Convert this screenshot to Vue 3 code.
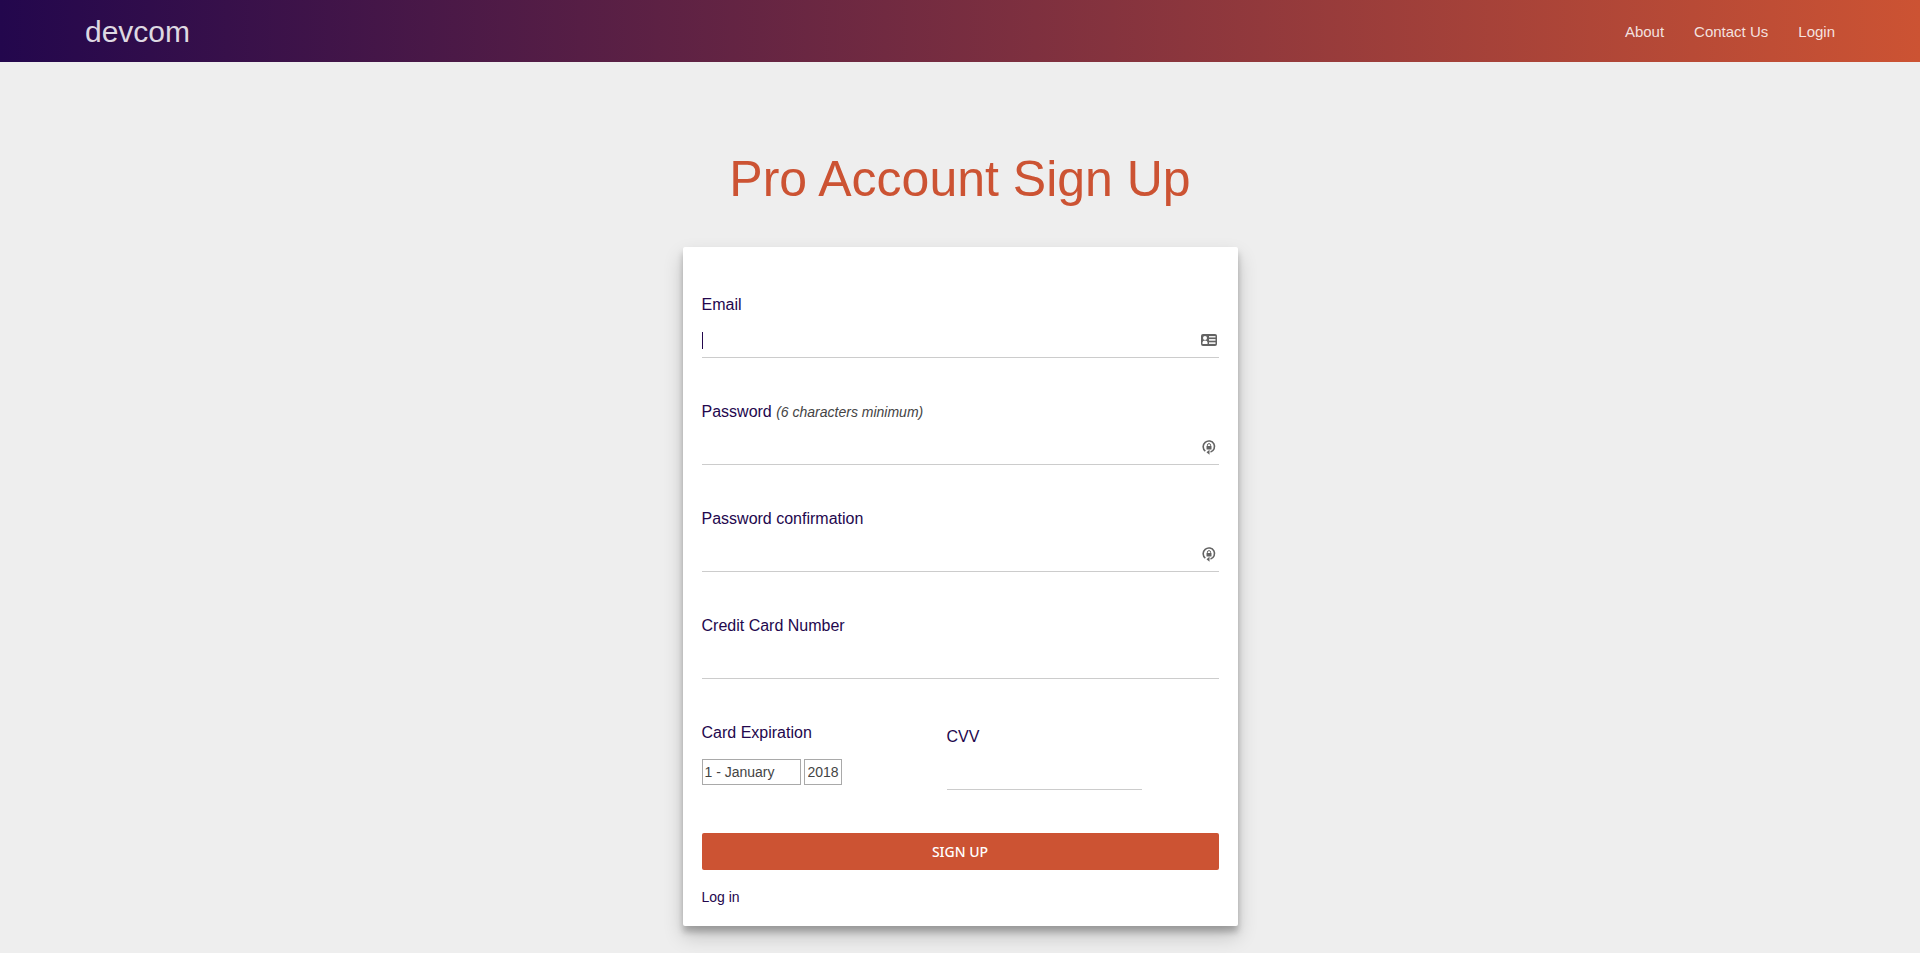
<script setup>
import { ref } from 'vue'

const navLinks = ['About', 'Contact Us', 'Login']
const fields = [
  { id: 'email', label: 'Email', type: 'email', icon: 'contact', caret: true },
  { id: 'password', label: 'Password', hint: '(6 characters minimum)', type: 'password', icon: 'lock' },
  { id: 'confirmation', label: 'Password confirmation', type: 'password', icon: 'lock' },
  { id: 'card', label: 'Credit Card Number', type: 'text' },
]
const values = ref({ email: '', password: '', confirmation: '', card: '', cvv: '' })
const months = ['January', 'February', 'March', 'April', 'May', 'June', 'July', 'August', 'September', 'October', 'November', 'December']
const years = Array.from({ length: 16 }, (_, i) => 2018 + i)
const month = ref(1)
const year = ref(2018)
</script>

<template>
  <header class="navbar">
    <a class="brand" href="#">devcom</a>
    <nav class="links">
      <a v-for="link in navLinks" :key="link" href="#">{{ link }}</a>
    </nav>
  </header>

  <main class="page">
    <h1 class="title">Pro Account Sign Up</h1>

    <form class="card" @submit.prevent>
      <div v-for="field in fields" :key="field.id" class="field">
        <label class="label" :for="field.id">{{ field.label }} <em v-if="field.hint" class="hint">{{ field.hint }}</em></label>
        <div class="control">
          <input :id="field.id" v-model="values[field.id]" class="input" :type="field.type" autocomplete="off">
          <span v-if="field.caret" class="caret"></span>
          <svg v-if="field.icon === 'contact'" class="icon" viewBox="0 0 18 18" aria-hidden="true">
            <rect x="1" y="3" width="16" height="12" rx="2" fill="#636363" />
            <circle cx="5" cy="7" r="2" fill="#fff" />
            <path d="M2.500 13v-1.500Q2.500 9.500 5 9.500T7.500 11.500V13z" fill="#fff" />
            <path d="M9 5.700h6.500M9 8.900h6.500M9 12.100h6.500" stroke="#eee" stroke-width="1.600" />
          </svg>
          <svg v-if="field.icon === 'lock'" class="icon" viewBox="0 0 18 18" aria-hidden="true">
            <path d="M5.300 13.100A5.700 5.700 0 1 1 10.500 14.100" fill="none" stroke="#636363" stroke-width="1.600" />
            <path d="M6.500 14.200L9.500 11.800V16.800z" fill="#636363" />
            <rect x="6.500" y="8" width="5" height="3.500" rx="0.500" fill="#636363" />
            <path d="M7.400 8.500V7.200a1.600 1.600 0 0 1 3.200 0V8.500" fill="none" stroke="#636363" stroke-width="1" />
          </svg>
        </div>
      </div>

      <div class="payment">
        <div>
          <label class="label" for="month">Card Expiration</label>
          <div class="selects">
            <select id="month" v-model="month" class="select month">
              <option v-for="(name, i) in months" :key="name" :value="i + 1">{{ i + 1 }} - {{ name }}</option>
            </select>
            <select v-model="year" class="select year" aria-label="Expiration year">
              <option v-for="y in years" :key="y" :value="y">{{ y }}</option>
            </select>
          </div>
        </div>
        <div class="cvv">
          <label class="label" for="cvv">CVV</label>
          <input id="cvv" v-model="values.cvv" class="input" type="text" autocomplete="off">
        </div>
      </div>

      <button class="submit" type="submit">SIGN UP</button>
      <a class="login" href="#">Log in</a>
    </form>
  </main>
</template>

<style>
body {
  background: #eee;
}
</style>

<style scoped>
.navbar,
.page {
  font-family: "Liberation Sans", Arial, sans-serif;
}

.navbar {
  box-sizing: border-box;
  display: flex;
  align-items: center;
  justify-content: space-between;
  height: 62px;
  padding: 2px 85px 0;
  background: linear-gradient(to right, #23074d, #cc5333);
}

.navbar a {
  color: rgba(255, 255, 255, 0.85);
  text-decoration: none;
}

.navbar .brand {
  font-size: 30px;
  line-height: 40px;
}

.links {
  display: flex;
  gap: 30px;
  font-size: 15px;
  line-height: 20px;
}

.page {
  padding: 87px 20px 27px;
}

.title {
  margin: 0 0 38px;
  color: #cc5333;
  font-size: 50px;
  font-weight: 400;
  line-height: 60px;
  text-align: center;
}

.card {
  box-sizing: border-box;
  display: flex;
  flex-direction: column;
  gap: 43px;
  max-width: 555px;
  margin: 0 auto;
  padding: 47px 19px 19px;
  border-radius: 2px;
  background: #fff;
  box-shadow: 0 10px 20px rgba(0, 0, 0, 0.19), 0 6px 6px rgba(0, 0, 0, 0.23);
}

.label {
  display: block;
  color: #23074d;
  font-size: 16px;
  line-height: 22px;
}

.hint {
  color: #444;
  font-size: 14px;
}

.control {
  position: relative;
}

.input {
  box-sizing: border-box;
  display: block;
  width: 100%;
  height: 42px;
  padding: 6px 0 0;
  border: 0;
  border-bottom: 1px solid #ccc;
  outline: 0;
  background: transparent;
  color: #23074d;
  font: 16px "Liberation Sans", Arial, sans-serif;
}

.caret {
  position: absolute;
  top: 16px;
  left: 0;
  width: 1px;
  height: 17px;
  background: #23074d;
}

.input:focus + .caret {
  display: none;
}

.icon {
  position: absolute;
  right: 1px;
  bottom: 9px;
  width: 18px;
  height: 18px;
}

.payment {
  display: grid;
  grid-template-columns: 245px 195px;
}

.selects {
  display: flex;
  gap: 3px;
  margin-top: 15px;
}

.select {
  box-sizing: border-box;
  height: 26px;
  padding: 0 2px;
  border: 1px solid #a9a9a9;
  border-radius: 0;
  appearance: none;
  background: #fff;
  color: #444;
  font: 14px "Liberation Sans", Arial, sans-serif;
}

.month {
  width: 99px;
}

.year {
  width: 38px;
  padding: 0 0 0 3px;
}

.cvv {
  padding-top: 4px;
}

.submit {
  height: 37px;
  padding: 0;
  border: 0;
  border-radius: 2px;
  background: #cc5333;
  color: #fff;
  font: 500 14px "Noto Sans", sans-serif;
  cursor: pointer;
}

.login {
  align-self: flex-start;
  margin-top: -26px;
  color: #23074d;
  font-size: 14px;
  line-height: 20px;
  text-decoration: none;
}
</style>
